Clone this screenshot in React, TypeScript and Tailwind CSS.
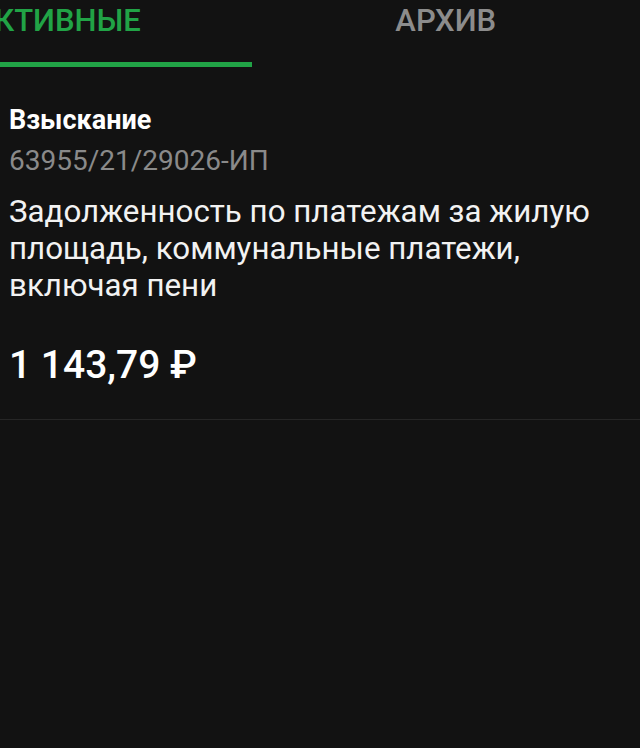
import React from "react";

export default function App() {
  return (
    <div
      className="w-[640px] h-[748px] bg-[#121212] overflow-hidden"
      style={{ fontFamily: "Roboto, 'Noto Sans', sans-serif" }}
    >
      <div className="flex ml-[-137px] h-[68px]">
        <div className="w-[389px] flex flex-col items-center">
          <div className="h-[62px] pb-[20px] flex items-center text-[31px] font-medium text-[#21a346]">
            АКТИВНЫЕ
          </div>
          <div className="h-[5px] w-full bg-[#21a346]" />
        </div>
        <div className="w-[389px] flex flex-col items-center">
          <div className="h-[62px] pb-[20px] flex items-center text-[31px] font-medium text-[#8c8c8c]">
            АРХИВ
          </div>
        </div>
      </div>
      <div className="px-[9px] pt-[36px] border-b border-[#262626] pb-[31px]">
        <div className="text-[27px] font-bold text-white leading-[32px]">Взыскание</div>
        <div className="text-[28px] text-[#8a8a8a] leading-[32px] mt-[9px]">63955/21/29026-ИП</div>
        <div className="text-[31.3px] text-[#f2f2f2] leading-[37px] mt-[16px]">
          Задолженность по платежам за жилую площадь, коммунальные платежи, включая пени
        </div>
        <div className="text-[39px] font-medium text-white leading-[46px] mt-[38px]">1 143,79 ₽</div>
      </div>
    </div>
  );
}
